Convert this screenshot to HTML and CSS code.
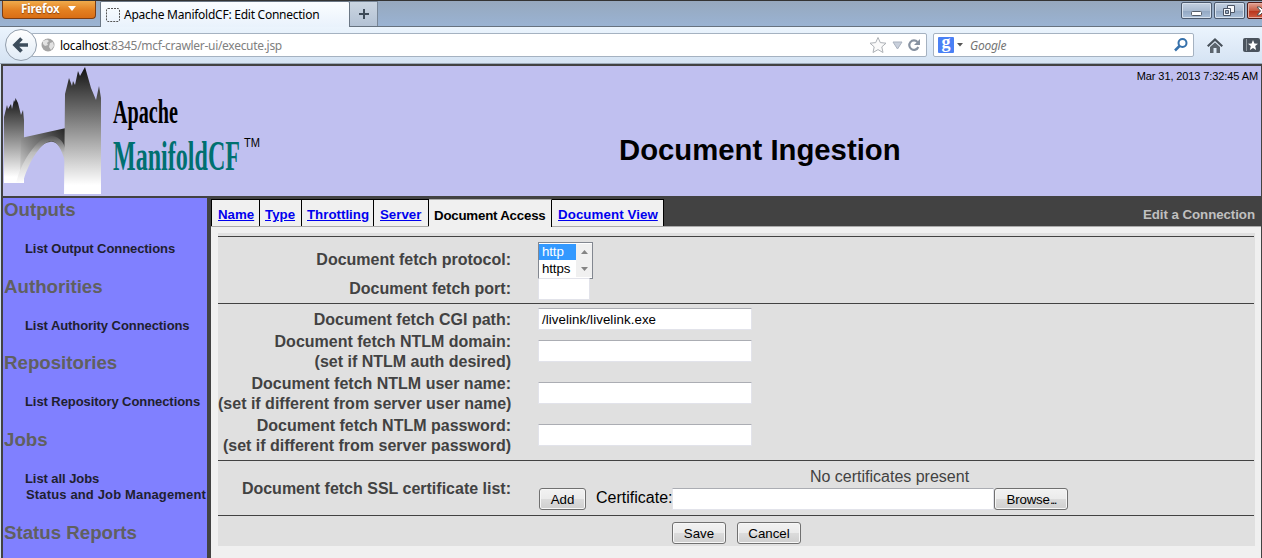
FILE: index.html
```html
<!DOCTYPE html>
<html lang="en">
<head>
<meta charset="utf-8">
<title>Apache ManifoldCF: Edit Connection</title>
<link rel="stylesheet" href="styles.css">
</head>
<body>
<div class="window">
  <header class="titlebar">
    <div class="firefox"><span>Firefox</span><svg width="8" height="5"><path d="M0 0H8L4 5Z" fill="#fff"/></svg></div>
    <div class="browser-tab">
      <svg width="14" height="14"><rect x=".5" y=".5" width="13" height="13" rx="1.5" fill="none" stroke="#555" stroke-dasharray="2 1"/></svg>
      <span>Apache ManifoldCF: Edit Connection</span>
    </div>
    <div class="newtab"><svg width="10" height="10"><path d="M5 0V10M0 5H10" stroke="#3d4a58" stroke-width="2"/></svg></div>
    <div class="winbuttons">
      <div class="winbtn"><svg width="30" height="16"><rect x="9.5" y="8.500" width="10" height="4" rx="1" fill="#fff" stroke="#555d69"/></svg></div>
      <div class="winbtn"><svg width="30" height="16"><g stroke="#4d5666" fill="#f6f8fb"><path d="M12.500 2.500H19.500V9.500H12.500Z"/><path d="M8.500 5.500H15.500V12.500H8.500Z"/><path d="M10.500 7.500H13.500V10.500H10.500Z" fill="#9fb0c6"/></g></svg></div>
      <div class="winbtn close"><svg width="30" height="16"><path d="M9 4H12L14.500 6.500L17 4H20L16.500 8L20 12H17L14.500 9.500L12 12H9L12.500 8Z" fill="#fff" stroke="#555"/></svg></div>
    </div>
  </header>
  <nav class="toolbar">
    <div class="back"><svg width="18" height="18"><path d="M16 9H4M9.500 2.500L3 9L9.500 15.500" fill="none" stroke="#3d4d5c" stroke-width="3.600"/></svg></div>
    <div class="urlbar">
      <svg width="14" height="14"><circle cx="7" cy="7" r="6.500" fill="#a4a4a4"/><path d="M2 3L6 1.500L8 3L6 5L7 7L4 8L2 6ZM9 5L12 4L13 8L10 12L8 9Z" fill="#e2e2e2"/></svg>
      <span class="address">localhost<i>:8345/mcf-crawler-ui/execute.jsp</i></span>
      <svg class="urlicons" width="52" height="18"><path d="M9 1.500L11.300 6.600L17 7.200L12.800 10.900L14 16.500L9 13.600L4 16.500L5.200 10.900L1 7.200L6.700 6.600Z" fill="#fafafa" stroke="#adb1b6"/><path d="M24 6H33L28.500 13Z" fill="#c9d0dc" stroke="#a9b1be"/><path d="M48.500 6A4.700 4.700 0 1 0 49.300 11" fill="none" stroke="#8792a1" stroke-width="2.200"/><path d="M51 3V9H45Z" fill="#8792a1"/></svg>
    </div>
    <div class="search">
      <span class="google">g</span>
      <svg width="6" height="4"><path d="M0 0H6L3 3.500Z" fill="#555"/></svg>
      <span class="placeholder">Google</span>
      <svg width="14" height="14"><circle cx="8.500" cy="5" r="4" fill="none" stroke="#3671ab" stroke-width="2"/><path d="M5.500 8L1 12.500" stroke="#3671ab" stroke-width="2.500"/></svg>
    </div>
    <svg class="home" width="16" height="15"><path d="M8 0L16 7.500L14.500 9L8 3L1.500 9L0 7.500Z" fill="#48515a"/><path d="M3 9L8 4.500L13 9V15H9.500V10H6.500V15H3Z" fill="#5b646d"/></svg>
    <svg class="bookmarks" width="17" height="15"><rect width="17" height="14" rx="2" fill="#4a535d"/><path d="M3.500 1V13" stroke="#8b949c"/><path d="M10 2L11.400 5.400L15 5.700L12.200 8L13.100 12L10 9.900L6.900 12L7.800 8L5 5.700L8.600 5.400Z" fill="#fff"/></svg>
  </nav>
  <div class="page">
    <section class="banner">
      <svg class="logo" width="262" height="130">
        <defs>
          <linearGradient id="stone" x1="0" y1="0" x2="0" y2="1"><stop offset="0" stop-color="#111"/><stop offset=".2" stop-color="#484848"/><stop offset=".93" stop-color="#fff"/></linearGradient>
          <linearGradient id="deck" x1="1" y1="0" x2="0" y2="1"><stop offset="0" stop-color="#222"/><stop offset=".6" stop-color="#8a8a8a"/><stop offset="1" stop-color="#ddd"/></linearGradient>
          <linearGradient id="arch" x1="0" y1="0" x2="0" y2="1"><stop offset="0" stop-color="#555"/><stop offset=".35" stop-color="#bbb"/><stop offset="1" stop-color="#fff"/></linearGradient>
        </defs>
        <path d="M1 117V51L4 39L5 43L8 38L9 43L11 34L12 36L12.500 32L15 37L18 49L20 44L21 54V117Z" fill="url(#stone)"/>
        <path d="M18 72L63 62V93C58 79 52 75 47 76C35 78 25 93 17 108Z" fill="url(#deck)"/>
        <path d="M15 110C22 90 37 69 49 70C57 71 61 77 62 82V95C58 81 53 74 47 75C37 77 24 99 20 117H13Z" fill="url(#arch)"/>
        <path d="M61 128L62 28L66 12L69 20L70 15L72 19L75 5L77 10L82 1L88 22L93 34L96 20L98 32V128Z" fill="url(#stone)"/>
        <text class="logo-text" x="110" y="57" font-size="33" textLength="65" lengthAdjust="spacingAndGlyphs">Apache</text>
        <text class="logo-text green" x="110" y="104" font-size="43" textLength="127" lengthAdjust="spacingAndGlyphs">ManifoldCF</text>
        <text class="tm" x="241" y="81" font-size="12" textLength="16" lengthAdjust="spacingAndGlyphs">TM</text>
      </svg>
      <h1>Document Ingestion</h1>
      <time>Mar 31, 2013 7:32:45 AM</time>
    </section>
    <div class="body">
      <aside class="sidebar">
        <h2>Outputs</h2><ul><li>List Output Connections</li></ul>
        <h2>Authorities</h2><ul><li>List Authority Connections</li></ul>
        <h2>Repositories</h2><ul><li>List Repository Connections</li></ul>
        <h2>Jobs</h2><ul><li>List all Jobs</li><li class="status">Status and Job Management</li></ul>
        <h2>Status Reports</h2>
      </aside>
      <main class="main">
        <div class="tabs">
          <div class="tab name"><a>Name</a></div><div class="tab type"><a>Type</a></div><div class="tab throttling"><a>Throttling</a></div><div class="tab server"><a>Server</a></div><div class="tab active">Document Access</div><div class="tab view"><a>Document View</a></div>
          <span class="crumb">Edit a Connection</span>
        </div>
        <div class="panel">
          <div class="group protocol">
            <div class="row r-protocol"><label>Document fetch protocol:</label>
              <div class="listbox"><div class="options"><div class="selected">http</div><div>https</div></div><div class="scroll"><svg width="17" height="33"><path d="M5 10L8.500 6L12 10ZM5 23L8.500 27L12 23Z" fill="#848484"/></svg></div></div></div>
            <div class="row r-port"><label>Document fetch port:</label><div class="input small"></div></div>
          </div>
          <div class="group access">
            <div class="row r-cgi"><label>Document fetch CGI path:</label><div class="input">/livelink/livelink.exe</div></div>
            <div class="row double"><label>Document fetch NTLM domain:<br>(set if NTLM auth desired)</label><div class="input"></div></div>
            <div class="row double"><label>Document fetch NTLM user name:<br>(set if different from server user name)</label><div class="input"></div></div>
            <div class="row double"><label>Document fetch NTLM password:<br>(set if different from server password)</label><div class="input"></div></div>
          </div>
          <div class="group certs">
            <label>Document fetch SSL certificate list:</label>
            <div class="certbox">
              <div class="none">No certificates present</div>
              <div class="upload"><div class="button add">Add</div><span class="cert">Certificate:</span><div class="input file"></div><div class="button browse">Browse<span class="dots">...</span></div></div>
            </div>
          </div>
          <div class="group actions"><div class="button save">Save</div><div class="button cancel">Cancel</div></div>
        </div>
      </main>
    </div>
  </div>
</div>
</body>
</html>
```
FILE: styles.css
```css
* { box-sizing: border-box; }
body { margin: 0; overflow: hidden; background: #d3e1f1; }
svg { display: block; flex: none; }
.window { width: 1262px; height: 558px; overflow: hidden; font-family: "Liberation Sans", Arial, sans-serif; }

.titlebar { height: 27px; display: flex; align-items: flex-start; background: linear-gradient(#96a8be, #9ab3d3); border-top: 1px solid #333; border-bottom: 1px solid #66727f; font-family: "Noto Sans", sans-serif; }
.titlebar > div { flex: none; }
.firefox { width: 94px; height: 18px; margin-left: 2px; display: flex; align-items: center; gap: 7px; padding: 0 0 2px 18px; background: linear-gradient(#f0ab4c, #e37f20 55%, #d96e15); border: 1px solid #7c3d13; border-top: 0; border-radius: 0 0 4px 4px; color: #fff; font-size: 11.5px; font-weight: 700; text-shadow: 0 1px 1px #8a4510; }
.firefox span { width: 40px; letter-spacing: -.15px; }
.browser-tab { width: 250px; height: 26px; margin-left: 4px; display: flex; align-items: center; gap: 5px; padding: 0 5px; background: linear-gradient(#fbfdff, #e9f2fc); border: 1px solid #6b7785; border-bottom: 0; border-radius: 2px 2px 0 0; font-size: 12px; letter-spacing: -.25px; white-space: nowrap; }
.browser-tab span { margin-left: -1px; }
.newtab { width: 28px; height: 25px; display: grid; place-items: center; background: linear-gradient(#cbd5e1, #b3c2d5); border: 1px solid #788697; border-left: 0; border-bottom: 0; }
.winbuttons { margin: 1px 0 0 803px; display: flex; gap: 2px; }
.winbtn { width: 31px; height: 17px; border: 1px solid #4c5a6e; border-radius: 2px; background: linear-gradient(#c4d1e1, #a9bbd1 50%, #92a7c2 51%, #aabfd8); box-shadow: inset 0 0 0 1px #d7e1ed; }
.winbtn.close { border-color: #501c18; background: linear-gradient(#e2a293, #c75b43 50%, #b73119 51%, #cf5d43); box-shadow: inset 0 0 0 1px #e5aa9e; }

.toolbar { height: 37px; display: flex; align-items: center; background: linear-gradient(#ebf4fd, #d5e3f3); border-bottom: 1px solid #9caaba; font-family: "Noto Sans", sans-serif; font-size: 12px; }
.back { width: 32px; height: 32px; margin-left: 5px; display: grid; place-items: center; border: 1px solid #929eac; border-radius: 50%; background: linear-gradient(#fff, #e0ebf6); position: relative; z-index: 1; }
.urlbar, .search { height: 24px; display: flex; align-items: center; background: #fff; border: 1px solid #a5b2c1; border-radius: 2px; }
.urlbar { width: 896px; margin-left: -6px; padding: 0 5px 0 9px; }
.address { margin-left: 5px; letter-spacing: -.3px; }
.address i { font-style: normal; color: #808080; }
.urlicons { margin-left: auto; }
.search { width: 261px; margin-left: 6px; padding: 0 5px 0 4px; gap: 5px; }
.google { width: 16px; height: 16px; background: #4a80f5; border-radius: 1px; color: #fff; font: bold 18px/11px "Liberation Serif", serif; text-align: center; }
.search svg:nth-child(2) { margin-left: -2px; }
.placeholder { flex: 1; margin-left: 2px; color: #757575; font-style: italic; letter-spacing: -.25px; }
.home { margin-left: 13px; }
.bookmarks { margin-left: 20px; }

.page { height: 494px; margin-left: 1px; border: solid #424242; border-width: 2px 1px 0 2px; background: #424242; }
.banner { height: 130px; display: flex; background: #c0c0f0; }
.logo-text { font-family: "Liberation Serif", serif; font-weight: 700; }
.logo-text.green { fill: #007070; }
.tm { font-family: "Liberation Sans", sans-serif; }
.banner h1 { width: 282px; margin: 67px 0 0 354px; font-size: 29.3px; line-height: 34px; letter-spacing: 0; color: #000; white-space: nowrap; }
.banner time { margin: 4px 3px 0 auto; font-size: 11px; line-height: 13px; letter-spacing: -.1px; color: #000; white-space: nowrap; }

.body { display: flex; height: 362px; padding-top: 2px; }
.sidebar { width: 204px; height: 360px; flex: none; background: #8080ff; }
.sidebar h2 { margin: 0 0 0 1px; font-size: 18.7px; line-height: 24px; color: #606060; }
.sidebar ul { list-style: none; margin: 0; padding: 19px 0 17px 22px; font-size: 13px; font-weight: 700; line-height: 16.500px; letter-spacing: -.07px; color: #202030; white-space: nowrap; }
.sidebar .status { padding-left: 1px; letter-spacing: .15px; }

.main { width: 1050px; margin-left: 4px; background: #f0f0f0; }
.tabs { height: 29px; display: flex; padding-top: 1px; background: #424242; border-bottom: 1px solid #aaa; font-size: 13.3px; font-weight: 700; line-height: 15px; white-space: nowrap; }
.tab { height: 27px; padding: 7px 0 0 5px; background: #f0f0f0; border-right: 1px solid #000; border-top: 1px solid #000; }
.tab a { color: #00e; text-decoration: underline; }
.name { width: 49px; padding-left: 6px; border-left: 1px solid #000; } .type { width: 42px; } .throttling { width: 72px; } .server { width: 55px; padding-left: 6px; } .active { width: 123px; height: 28px; padding: 8px 0 0 5px; letter-spacing: -.22px; border-top-color: #aaa; } .view { width: 112px; padding-left: 6px; letter-spacing: .08px; }
.crumb { margin: 8px 6px 0 auto; color: #c0c0c0; letter-spacing: -.06px; }

.panel { width: 1037px; height: 313px; margin: 6px 0 0 7px; padding-top: 3px; background: #e0e0e0; font-size: 16px; color: #424242; }
.group { margin-right: 1px; border-top: 1px solid #424242; }
.row { display: flex; align-items: flex-start; }
label { width: 293px; flex: none; font-weight: 700; line-height: 20px; text-align: right; white-space: nowrap; }
.protocol { height: 67px; padding-top: 5px; }
.r-protocol { height: 36px; } .r-protocol label { padding-top: 8px; }
.r-port { height: 22px; } .r-port label { padding-top: 1px; }
.access { height: 157px; padding-top: 4px; }
.r-cgi { height: 24px; } .r-cgi label { padding-top: 2px; }
.double { height: 42px; } .double .input { margin-top: 8px; }
.input { width: 214px; height: 22px; margin-left: 27px; padding: 2px 3px; background: #fff; border: 1px solid #e2e3ea; border-top-color: #abadb3; border-radius: 1px; color: #000; font-size: 13.3px; line-height: 17px; letter-spacing: .08px; }
.input.small { width: 52px; border-top-color: #e2e3ea; }
.listbox { width: 55px; height: 37px; margin-left: 27px; display: flex; border: 1px solid #828790; padding: 1px 0; background: #fff; color: #000; font-size: 13.3px; line-height: 16px; }
.options { width: 37px; } .options div { height: 17px; padding: 1px 0 0 3px; letter-spacing: -.12px; }
.options .selected { height: 16px; padding-top: 0; background: #3399ff; color: #fff; }
.scroll { width: 16px; overflow: hidden; background: #f0f0f0; }
.certs { height: 55px; display: flex; }
.certs label { padding-top: 18px; }
.certbox { width: 703px; margin-left: 27px; padding-top: 6px; }
.none { line-height: 20px; text-align: center; }
.upload { display: flex; color: #000; }
.cert { width: 76px; margin-left: 10px; padding-top: 1px; line-height: 20px; }
.input.file { width: 322px; margin: 1px 0 0 0; margin-left: 0; }
.button { height: 22px; margin-top: 1px; background: linear-gradient(#f2f2f2, #ebebeb 48%, #dcdcdc 50%, #cfcfcf); border: 1px solid #707070; border-radius: 3px; box-shadow: inset 0 0 0 1px #f7f7f7; color: #000; font-size: 13.3px; line-height: 21px; text-align: center; white-space: nowrap; }
.add { width: 47px; margin-left: 1px; } .browse { width: 74px; margin-left: 0; letter-spacing: -.15px; } .dots { letter-spacing: -1.800px; }
.actions { display: flex; padding: 5px 0 0 454px; }
.save { width: 54px; } .cancel { width: 64px; margin-left: 11px; }
```
